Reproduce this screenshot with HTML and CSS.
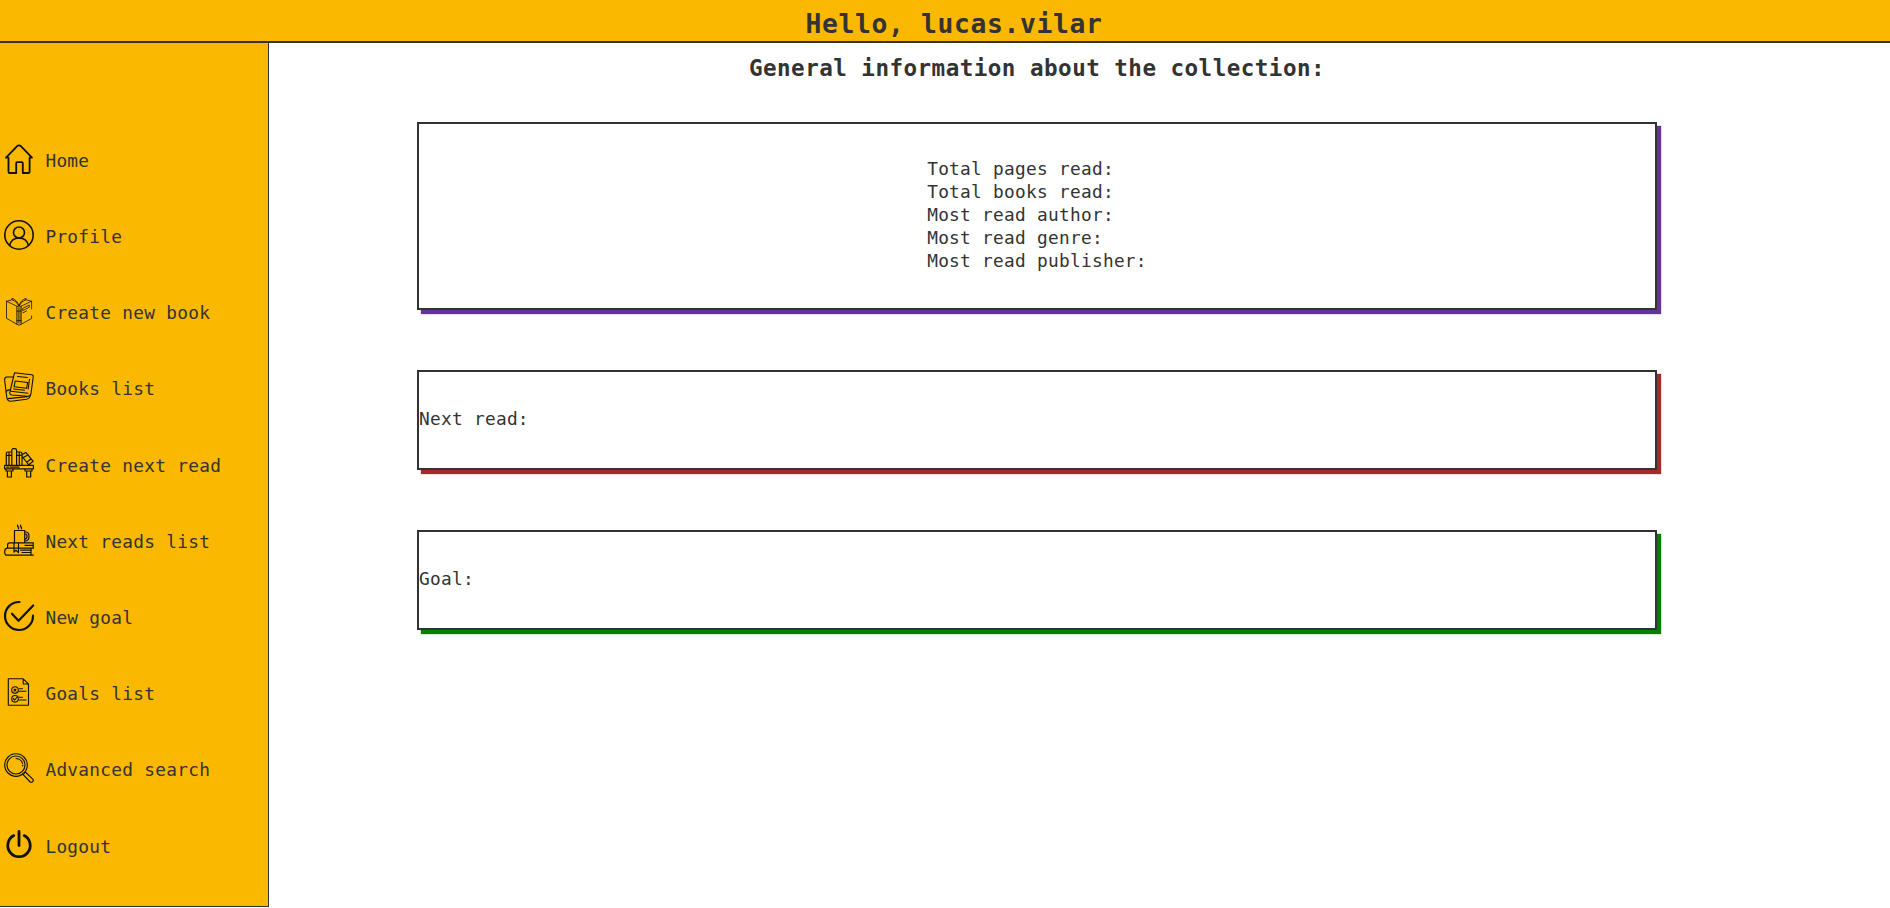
FILE: index.html
```html
<!DOCTYPE html>
<html lang="en">
<head>
<meta charset="utf-8">
<title>Book collection</title>
<link rel="stylesheet" href="styles.css">
</head>
<body>
<header class="topbar"><h1 class="greeting">Hello, lucas.vilar</h1></header>
<div class="layout">
  <nav class="sidebar">
    <a class="item"><svg class="icon" viewBox="0 0 30 30" stroke-width="1.8"><path d="M2 13.7 12.9 2.4Q15 .2 17.1 2.4L28 13.7H25.6V27.7Q25.6 29 24.3 29H18.8V19.2Q18.8 18.2 17.8 18.2H13.2Q12.2 18.2 12.2 19.2V29H5.8Q4.5 29 4.5 27.7V13.7Z"/></svg><span>Home</span></a>
    <a class="item"><svg class="icon" viewBox="0 0 30 30" stroke-width="1.6"><circle cx="15" cy="15" r="14.2"/><circle cx="15" cy="12.5" r="5.5"/><path d="M5.7 25.3Q7.3 18.2 15 18Q22.7 18.2 24.3 25.3"/></svg><span>Profile</span></a>
    <a class="item"><svg class="icon" viewBox="0 0 30 30" stroke-width=".8"><path d="M2.5 5.2V22.3L12.8 28.2M27.6 5.2V13M27.6 20V22.5L17.2 28.2M2.5 5.2 12.8 10.2V28.2Q15 30.2 17.2 28.2V10.2L27.6 5.2M12.8 10.2Q15 12 17.2 10.2M14.2 12V27M16 12V27M13 15.2H17M13 24.5H17M3.5 5.2 8 3.7Q12.5 5 15 10Q17.5 5 22 3.7L26.5 5M8 3.7V2.3Q13.3 4 15 10Q16.7 4 22 2.3V3.7M19 12.2 25.3 9V11.2L19 14.5ZM19 16.8 22.5 15"/></svg><span>Create new book</span></a>
    <a class="item"><svg class="icon" viewBox="0 0 30 30" stroke-width="1.1"><path d="M10.5.8 27.5 2.8Q29.5 3 29.2 5L27 21.5Q26.7 24 24 24.2L7.5 23Q5 22 6 19.5Z"/><path d="M9.2 5H3Q.3 5.3.6 8L2.8 25.5Q3.3 29.3 7 29.2L22.5 27.2Q26 26.5 26.5 22.5M1.7 20Q3.5 17.5 6.5 18M7 19.2 24 21.2M4.2 26.6 23 24.6M11.2 9 23.7 10.5 22.5 16.3 10 14.8ZM13.5 4.5 23.5 5.5M25.5 7.2 24.2 17M9.5 17 20.5 18.3"/></svg><span>Books list</span></a>
    <a class="item"><svg class="icon" viewBox="0 0 30 30" stroke-width="1.2"><path d="M.6 17.4H29.4V20.8H.6ZM2.3 17V5.5Q2.3 4 4 4H7.8V17M7.8 17V2.5Q7.8 .7 9.5.7H10.8Q12.6.7 12.6 2.5V17M12.6 4H16Q18 4 18 5.7V17M5 4.5V17M15.3 4.5V17M2.3 7.3H7.8M12.6 7.3H18M18.5 6.6 21.8 4.4 29.2 13.3 24.7 16.8 17.8 8M19.8 9.3 24.3 6.8M22.8 14.3 27.2 10.8M2 21V23H9V21M21 21V23H28V21M3.4 23V29H7.4V23M22.7 23V29H26.7V23M2.7 19.2H4.5M6 19.2H15"/></svg><span>Create next read</span></a>
    <a class="item"><svg class="icon" viewBox="0 0 30 30" stroke-width="1.2"><path d="M10.5 17.5V5.5H20.7V17.5M20.7 7H22Q25 7 25 11.5T21 16M20.7 9H21.5Q23 9 23 11.5T20.8 14M13.6.2V1.3L14.6 2.5V3.8M16.5.2V1.3L17.5 2.5V3.8M29.5 17.8H5.5Q3.6 17.8 3.6 20V23.2H29.5M29.2 18V23M21 20.4H29M10 18V27.2L12 25.2 14.5 27.6V18M10 23.2H3Q.7 23.5.7 27T3.2 30.1H29.3M16.6 25.2H27.2M18 27.5H27M27 23.5V30"/></svg><span>Next reads list</span></a>
    <a class="item"><svg class="icon" viewBox="0 0 30 30" stroke-width="2.2"><path d="M15.5 1A14 14 0 1 0 29 14.7M8 12.7 14.5 19.7 29.2 4.5"/></svg><span>New goal</span></a>
    <a class="item"><svg class="icon" viewBox="0 0 30 30" stroke-width="1.1"><path d="M19.2 1.8H4.3V28.2H24.5V7ZM19.2 1.8V7H24.5"/><circle cx="11" cy="13.1" r="3.3"/><circle cx="11" cy="21.8" r="3.3"/><path d="m10 12.1 2 2m0-2-2 2M9.3 21.5 10.7 23 14 19.2M15.2 11.7H18.5M15 14.2H22M15.2 20.2H18.5M15 23H22"/></svg><span>Goals list</span></a>
    <a class="item"><svg class="icon" viewBox="0 0 30 30" stroke-width="1.15"><circle cx="12" cy="12" r="11.3"/><circle cx="12" cy="12" r="9"/><path d="M12 5.5Q17.5 6 18.5 10.5M18.7 12V13M19 21.3 21.3 19 29 26.3Q29.8 27.4 28.7 28.6T26.2 29L19 21.3"/></svg><span>Advanced search</span></a>
    <a class="item"><svg class="icon" viewBox="0 0 30 30" stroke-width="2.8"><path d="M15 2.4V16.5M9.8 6.6A11.2 11.2 0 1 0 20.2 6.6"/></svg><span>Logout</span></a>
  </nav>
  <main class="content">
    <h2 class="heading">General information about the collection:</h2>
    <section class="card card-stats">
      <div>
        <p>Total pages read:</p>
        <p>Total books read:</p>
        <p>Most read author:</p>
        <p>Most read genre:</p>
        <p>Most read publisher:</p>
      </div>
    </section>
    <section class="card card-next"><p>Next read:</p></section>
    <section class="card card-goal"><p>Goal:</p></section>
  </main>
</div>
</body>
</html>
```

FILE: styles.css
```css
* { box-sizing: border-box; margin: 0; padding: 0; }
body {
  height: 908px;
  overflow: hidden;
  background: #fff;
  color: #333;
  font: 17.8px/23px "DejaVu Sans Mono", monospace;
  letter-spacing: 0.28px;
}
.topbar {
  height: 43px;
  padding: 4px 0 0 18px;
  background: #fab800;
  border-bottom: 2px solid #333;
  text-align: center;
}
.greeting { font-size: 26.3px; line-height: 40px; letter-spacing: 0.66px; }
.layout { display: flex; height: 864px; }
.sidebar {
  flex: none;
  width: 269px;
  padding: 77.5px 0 0 4.4px;
  background: #fab800;
  border-right: 1px solid #333;
  border-bottom: 1px solid #333;
}
.item { display: flex; align-items: center; gap: 11px; height: 76.2px; color: #333; }
.item span { padding-top: 3.6px; }
.icon {
  flex: none;
  width: 30px;
  height: 30px;
  overflow: visible;
  fill: none;
  stroke: #111;
  stroke-linecap: round;
  stroke-linejoin: round;
}
.content {
  display: flex;
  flex-direction: column;
  gap: 60px;
  width: 1388px;
  padding: 12px 0 0 148px;
}
.heading {
  height: 26px;
  margin-bottom: -19px;
  font-size: 22.6px;
  line-height: 26px;
  letter-spacing: 0.45px;
  text-align: center;
}
.card {
  display: flex;
  align-items: center;
  height: 100px;
  padding-bottom: 3px;
  border: 2px solid #333;
}
.card-stats { height: 188px; justify-content: center; box-shadow: 4px 4px 1px rebeccapurple; }
.card-next { box-shadow: 4px 4px 1px brown; }
.card-goal { box-shadow: 4px 4px 1px green; }
```
